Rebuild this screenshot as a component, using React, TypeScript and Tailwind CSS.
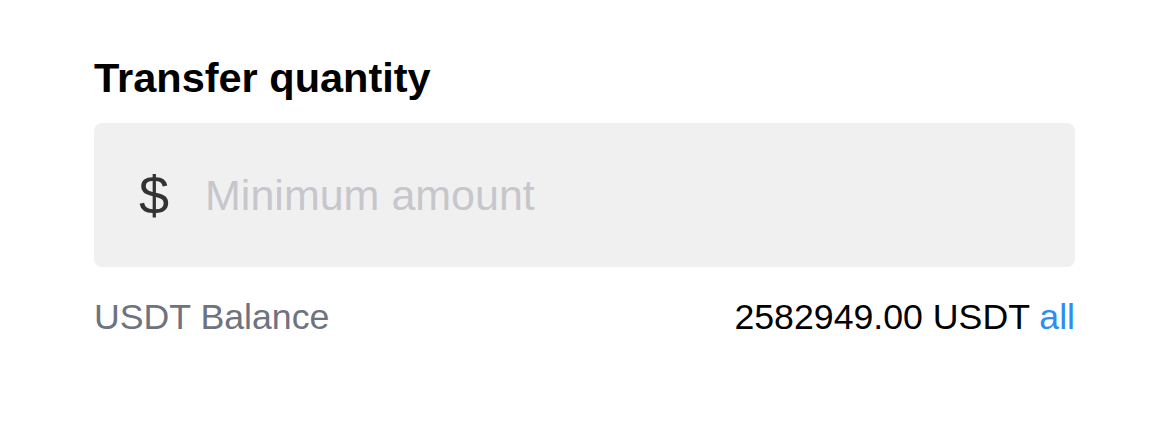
const TransferQuantity = () => {
  return (
    <section className="px-[94px] pt-[52px] pb-[80px]">
      <h2 className="text-[41.5px] leading-[52px] font-bold text-black">Transfer quantity</h2>
      <div className="mt-[19px] h-[144px] rounded-[8px] bg-[#f0f0f1] flex items-center pl-[45px] pr-6">
        <span className="text-[54px] font-light text-[#333] leading-none">$</span>
        <input
          className="ml-[36px] flex-1 bg-transparent outline-none text-[43px] text-black placeholder:text-[#c7c7cb]"
          placeholder="Minimum amount"
          type="text"
        />
      </div>
      <div className="mt-[30px] flex items-center justify-between text-[35.7px] leading-[40px]">
        <span className="text-[#6e7380]">USDT Balance</span>
        <span className="text-black">
          2582949.00 USDT <span className="text-[#2b8ef0]">all</span>
        </span>
      </div>
    </section>
  );
};

export default function App() {
  return (
    <div className="w-[1169px] h-[447px] bg-white font-['Liberation_Sans',Arial,sans-serif]">
      <TransferQuantity />
    </div>
  );
}
